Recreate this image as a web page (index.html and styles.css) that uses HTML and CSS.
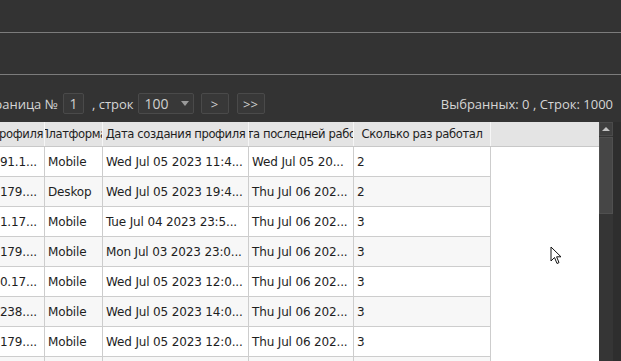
FILE: index.html
```html
<!DOCTYPE html>
<html lang="ru">
<head>
  <meta charset="UTF-8">
  <meta name="viewport" content="width=device-width, initial-scale=1.0">
  <title>Profiles</title>
  <link rel="stylesheet" href="styles.css">
</head>
<body>
  <div class="topbar"></div>
  <div class="divider"></div>
  <div class="tabbar"></div>
  <div class="divider"></div>

  <div class="toolbar">
    <div class="pager">
      <span class="label label-page">Страница №</span>
      <span class="box page-box">1</span>
      <span class="label">, строк</span>
      <span class="box select-box">100 <span class="caret"></span></span>
      <span class="box btn">&gt;</span>
      <span class="box btn">&gt;&gt;</span>
    </div>
    <div class="stats">Выбранных: 0 , Строк: 1000</div>
  </div>

  <div class="grid">
    <div class="table-wrap">
      <div class="head">
        <div class="hcell right">IP профиля</div>
        <div class="hcell">Платформа</div>
        <div class="hcell">Дата создания профиля</div>
        <div class="hcell">Дата последней работы</div>
        <div class="hcell">Сколько раз работал</div>
        <div class="hcell filler"></div>
      </div>

      <div class="row">
        <div class="cell right">91.1...</div>
        <div class="cell">Mobile</div>
        <div class="cell">Wed Jul 05 2023 11:4...</div>
        <div class="cell">Wed Jul 05 20...</div>
        <div class="cell">2</div>
      </div>
      <div class="row">
        <div class="cell right">179....</div>
        <div class="cell">Deskop</div>
        <div class="cell">Wed Jul 05 2023 19:4...</div>
        <div class="cell">Thu Jul 06 202...</div>
        <div class="cell">2</div>
      </div>
      <div class="row">
        <div class="cell right">1.17...</div>
        <div class="cell">Mobile</div>
        <div class="cell">Tue Jul 04 2023 23:5...</div>
        <div class="cell">Thu Jul 06 202...</div>
        <div class="cell">3</div>
      </div>
      <div class="row">
        <div class="cell right">179....</div>
        <div class="cell">Mobile</div>
        <div class="cell">Mon Jul 03 2023 23:0...</div>
        <div class="cell">Thu Jul 06 202...</div>
        <div class="cell">3</div>
      </div>
      <div class="row">
        <div class="cell right">0.17...</div>
        <div class="cell">Mobile</div>
        <div class="cell">Wed Jul 05 2023 12:0...</div>
        <div class="cell">Thu Jul 06 202...</div>
        <div class="cell">3</div>
      </div>
      <div class="row">
        <div class="cell right">238....</div>
        <div class="cell">Mobile</div>
        <div class="cell">Wed Jul 05 2023 14:0...</div>
        <div class="cell">Thu Jul 06 202...</div>
        <div class="cell">3</div>
      </div>
      <div class="row">
        <div class="cell right">179....</div>
        <div class="cell">Mobile</div>
        <div class="cell">Wed Jul 05 2023 12:0...</div>
        <div class="cell">Thu Jul 06 202...</div>
        <div class="cell">3</div>
      </div>
      <div class="row">
        <div class="cell right">5.17...</div>
        <div class="cell">Mobile</div>
        <div class="cell">Wed Jul 05 2023 10:2...</div>
        <div class="cell">Thu Jul 06 202...</div>
        <div class="cell">3</div>
      </div>

      <svg class="cursor" width="12" height="19" viewBox="0 0 12 19">
        <path d="M1 1 L1 15 L4.5 11.5 L7 17.5 L9 16.6 L6.6 10.8 L11 10.8 Z" fill="#fff" stroke="#111" stroke-width="1"/>
      </svg>
    </div>

    <div class="scrollbar">
      <div class="sb-up"><span class="sb-arrow"></span></div>
      <div class="sb-thumb"></div>
      <div class="sb-track"></div>
    </div>
    <div class="edge"></div>
  </div>
</body>
</html>
```

FILE: styles.css
```css
* {
  box-sizing: border-box;
}

body {
  margin: 0;
  background-color: #333333;
  font-family: "DejaVu Sans", sans-serif;
  overflow: hidden;
  height: 361px;
}

.topbar {
  height: 32px;
}

.divider {
  height: 1px;
  background-color: #7c7c7c;
}

.tabbar {
  height: 41px;
}

.toolbar {
  display: flex;
  justify-content: space-between;
  align-items: center;
  height: 47px;
  padding: 18px 8px 8px 0;
  font-family: "Open Sans", sans-serif;
  font-size: 13px;
  color: #d6d6d6;
}

.pager {
  display: flex;
  align-items: center;
}

.label-page {
  margin-left: -20px;
}

.box {
  display: flex;
  align-items: center;
  height: 21px;
  border: 1px solid #4a4a4a;
  border-radius: 2px;
  background-color: #383838;
  color: #cfcfcf;
  font-size: 14px;
}

.page-box {
  width: 21px;
  justify-content: center;
  margin: 0 8px 0 5px;
}

.select-box {
  width: 56px;
  padding-left: 6px;
  margin-left: 4px;
}

.caret {
  width: 0;
  height: 0;
  border-left: 4px solid transparent;
  border-right: 4px solid transparent;
  border-top: 5px solid #9a9a9a;
  margin-left: 12px;
}

.btn {
  width: 28px;
  justify-content: center;
  margin-left: 7px;
  font-size: 13px;
}

.btn + .btn {
  margin-left: 8px;
}

.grid {
  display: flex;
  height: 239px;
}

.table-wrap {
  position: relative;
  flex: 1;
  background-color: #ffffff;
  overflow: hidden;
  font-size: 12px;
  letter-spacing: -0.15px;
  color: #1e1e1e;
}

.head {
  display: grid;
  grid-template-columns: 45px 58px 146px 105px 137px 1fr;
  height: 25px;
  background-color: #e4e4e4;
  border-bottom: 1px solid #c8c8c8;
  font-size: 11.6px;
  letter-spacing: -0.4px;
}

.hcell {
  display: flex;
  justify-content: center;
  align-items: center;
  white-space: nowrap;
  overflow: hidden;
  border-right: 1px solid #f6f6f6;
}

.hcell.right {
  justify-content: flex-end;
  padding-right: 1px;
}

.hcell.filler {
  border-right: none;
}

.row {
  display: grid;
  grid-template-columns: 45px 58px 146px 105px 137px;
  width: 491px;
  height: 30px;
  border-bottom: 1px solid #cdcdcd;
}

.row:nth-child(odd) {
  background-color: #f7f7f7;
}

.cell {
  display: flex;
  align-items: center;
  padding-left: 3px;
  white-space: nowrap;
  overflow: hidden;
  border-right: 1px solid #cdcdcd;
}

.cell.right {
  justify-content: flex-end;
  padding-right: 7px;
}

.cursor {
  position: absolute;
  left: 550px;
  top: 124px;
}

.scrollbar {
  display: flex;
  flex-direction: column;
  width: 14px;
  background-color: #353535;
}

.sb-up {
  display: flex;
  justify-content: center;
  align-items: center;
  height: 14px;
  background-color: #3f3f3f;
  border: 1px solid #4b4b4b;
}

.sb-arrow {
  width: 0;
  height: 0;
  border-left: 4px solid transparent;
  border-right: 4px solid transparent;
  border-bottom: 4px solid #c4c4c4;
}

.sb-thumb {
  height: 77px;
  margin-top: 1px;
  background-color: #464646;
  border: 1px solid #505050;
}

.sb-track {
  flex: 1;
}

.edge {
  width: 8px;
  background-color: #2e2e2e;
}
```
